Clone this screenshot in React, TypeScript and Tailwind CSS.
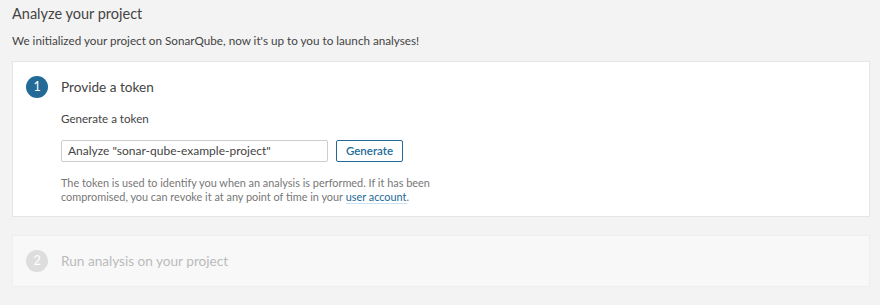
import React from "react";

export default function App() {
  return (
    <div
      className="w-[880px] h-[305px] bg-[#f3f3f3] text-[#444] overflow-hidden"
      style={{ fontFamily: 'Lato, "Open Sans", sans-serif' }}
    >
      <div className="px-[12px] pt-[2px]">
        <h1 className="text-[14.5px] leading-[24px] font-normal text-[#444]">Analyze your project</h1>
        <p className="mt-[5px] text-[11.7px] leading-[18px] text-[#444]">
          We initialized your project on SonarQube, now it's up to you to launch analyses!
        </p>

        <div className="mt-[12px] w-[858px] h-[156px] bg-white border border-[#e6e6e6] px-[13px] pt-[13px]">
          <div className="flex items-center gap-[13px] h-[24px]">
            <div className="w-[22px] h-[22px] rounded-full bg-[#236a97] text-white text-[12.5px] flex items-center justify-center">
              1
            </div>
            <div className="text-[13.6px] text-[#444]">Provide a token</div>
          </div>
          <div className="pl-[35px]">
            <div className="mt-[11px] text-[11.6px] leading-[18px] text-[#444]">Generate a token</div>
            <div className="mt-[12px] flex items-center gap-[8px]">
              <div className="w-[267px] h-[22px] border border-[#cdcdcd] rounded-[2px] px-[6px] flex items-center text-[12px] text-[#444]">
                Analyze "sonar-qube-example-project"
              </div>
              <div className="w-[67px] h-[22px] border border-[#236a97] rounded-[2px] flex items-center justify-center text-[11.5px] font-semibold text-[#236a97]">
                Generate
              </div>
            </div>
            <p className="mt-[14px] text-[10.9px] leading-[14px] text-[#777]">
              The token is used to identify you when an analysis is performed. If it has been
              <br />
              compromised, you can revoke it at any point of time in your{" "}
              <span className="text-[#236a97] border-b border-[#cae3f2]">user account</span>.
            </p>
          </div>
        </div>

        <div className="mt-[18px] w-[858px] h-[52px] bg-[#f8f8f8] border border-[#eeeeee] px-[13px] flex items-center gap-[13px]">
          <div className="w-[22px] h-[22px] rounded-full bg-[#dddddd] text-white text-[12.5px] flex items-center justify-center">
            2
          </div>
          <div className="text-[13.6px] text-[#bbbbbb]">Run analysis on your project</div>
        </div>
      </div>
    </div>
  );
}
